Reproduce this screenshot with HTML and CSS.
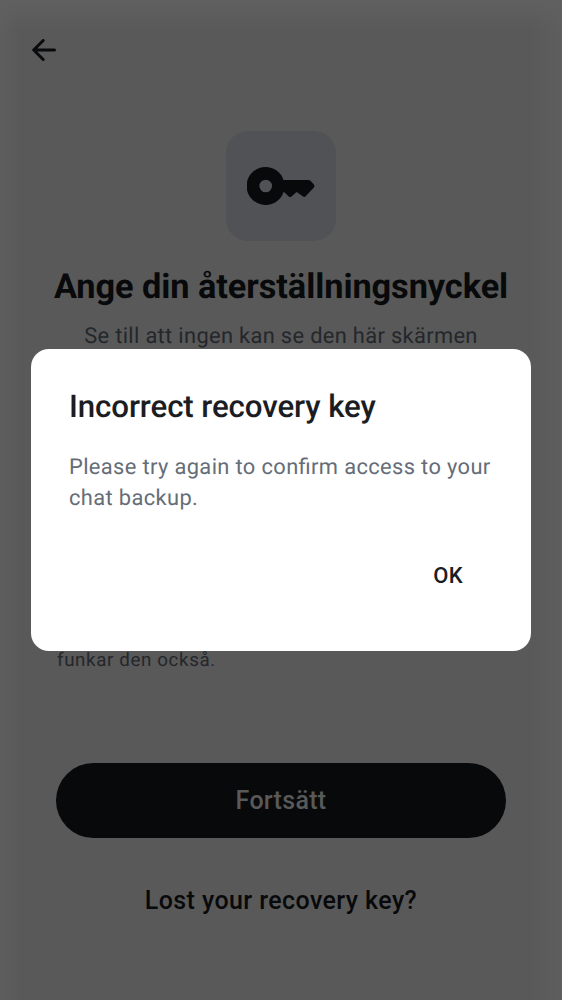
FILE: index.html
```
<!DOCTYPE html>
<html lang="sv">
<head>
<meta charset="utf-8">
<title>Ange din återställningsnyckel</title>
<link rel="stylesheet" href="styles.css">
</head>
<body>
<main class="screen">
  <header class="topbar">
    <svg class="back" viewBox="0 0 24 22" aria-label="Back"><path d="M11.200 1.500 1.700 11l9.500 9.500M2 11h20.500"/></svg>
  </header>
  <div class="key-tile">
    <svg class="key" viewBox="0 0 68 38"><path fill-rule="evenodd" d="M18.700 0a19 19 0 0 1 17.800 12.900H61.500Q62.500 12.900 63.200 13.600L66.900 17.500Q68 19 66.900 20.500L58.600 29.300Q57.300 30.600 55.800 29.300L49.600 24.900L44.500 29.500Q43.200 30.600 41.800 29.500L36.700 24.700A19 19 0 1 1 18.700 0Zm0 12.700a6.300 6.300 0 1 0 0 12.600 6.300 6.300 0 0 0 0-12.600Z"/></svg>
  </div>
  <h1 class="title">Ange din återställningsnyckel</h1>
  <p class="subtitle">Se till att ingen kan se den här skärmen</p>
  <p class="hint">funkar den också.</p>
  <button class="primary">Fortsätt</button>
  <button class="link">Lost your recovery key?</button>
</main>
<div class="overlay">
  <section class="dialog" role="dialog">
    <h2 class="dialog-title">Incorrect recovery key</h2>
    <p class="dialog-text">Please try again to confirm access to your<br>chat backup.</p>
    <button class="ok">OK</button>
  </section>
</div>
</body>
</html>
```
FILE: styles.css
```
* { box-sizing: border-box; margin: 0; }
body { background: #595959; font-family: Roboto, "Liberation Sans", sans-serif; text-rendering: geometricPrecision; }
button { border: 0; padding: 0; background: none; font: inherit; display: block; }
.screen { height: 1000px; padding: 0 56px; display: flex; flex-direction: column; align-items: center; background: linear-gradient(#606060, #60606000 30px), linear-gradient(90deg, #5e5e5e, #5e5e5e00 20px, #5e5e5e00 calc(100% - 32px), #5e5e5e); white-space: nowrap; }
.topbar { height: 131px; width: 100%; padding-top: 39px; }
.back { display: block; width: 24px; height: 22px; margin-left: -24.5px; fill: none; stroke: #0a0b0d; stroke-width: 3; stroke-linecap: round; stroke-linejoin: round; }
.key-tile { width: 110px; height: 110px; border-radius: 22px; background: #515256; display: flex; align-items: center; justify-content: center; }
.key { width: 68px; height: 38px; margin-right: 1px; fill: #08090b; }
.title { margin-top: 24px; font-size: 34.375px; line-height: 44px; letter-spacing: -.08px; font-weight: 700; color: #08090b; }
.subtitle { margin-top: 12px; font-size: 21.875px; line-height: 31px; letter-spacing: .33px; color: #24272b; }
.hint { margin-top: 296px; padding-left: 1px; width: 100%; font-size: 18.75px; line-height: 25px; letter-spacing: .62px; color: #24272b; }
.primary { margin-top: 89.5px; width: 450px; height: 75px; flex: none; border-radius: 38px; background: #08090b; color: #595959; font-size: 25px; font-weight: 500; letter-spacing: .3px; }
.link { margin-top: 45.5px; font-size: 25px; line-height: 36px; font-weight: 500; letter-spacing: .41px; color: #08090b; }
.overlay { position: absolute; inset: 0; display: flex; align-items: center; justify-content: center; }
.dialog { width: 500px; height: 301.5px; padding: 39px 38px 36.5px; border-radius: 18px; background: #fff; display: flex; flex-direction: column; white-space: nowrap; }
.dialog-title { font-size: 31.25px; line-height: 38px; letter-spacing: -.1px; font-weight: 500; color: #1b1d22; }
.dialog-text { margin-top: 26px; font-size: 21.875px; line-height: 31px; letter-spacing: .37px; font-feature-settings: "liga" 1; color: #656d77; }
.ok { align-self: flex-end; margin: 46px 30px 0 0; font-size: 22px; line-height: 31px; letter-spacing: .3px; font-weight: 500; color: #1b1d22; }
```
